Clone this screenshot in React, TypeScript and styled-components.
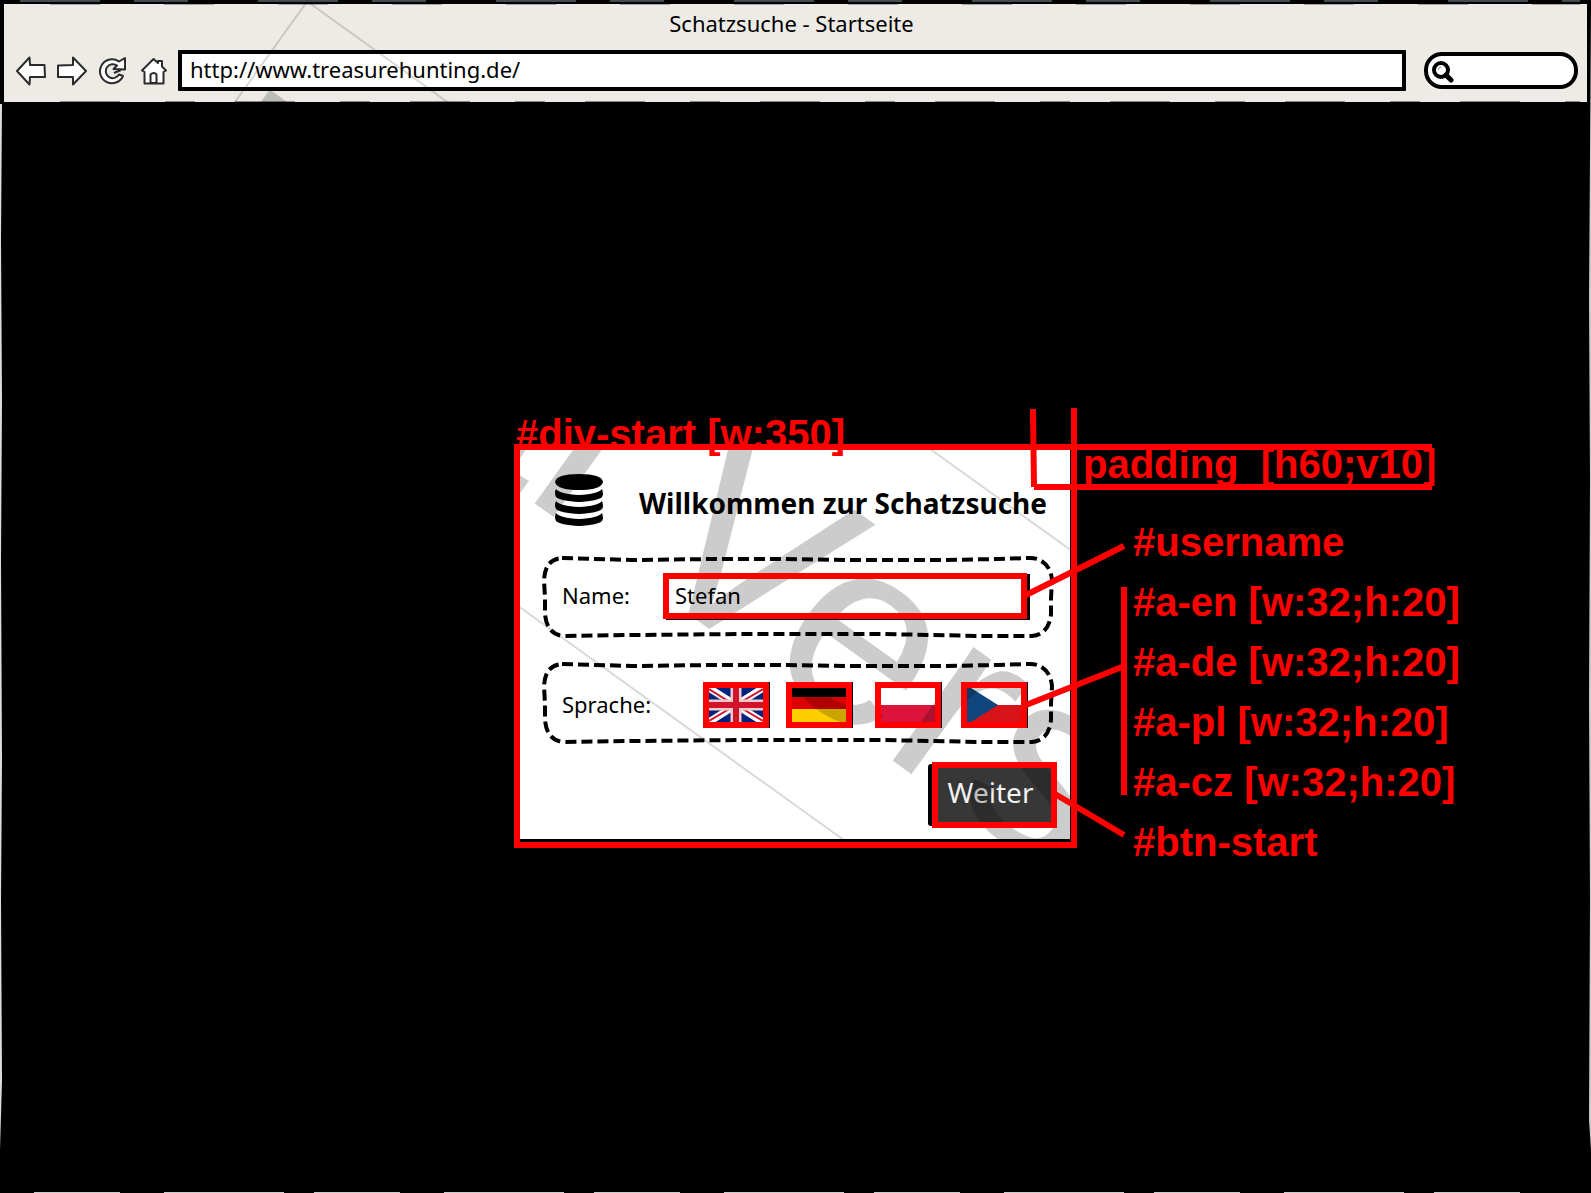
import React from "react";
import styled, { createGlobalStyle } from "styled-components";

const RED = "#ff0000";
const UI_FONT = '"Noto Sans", "Open Sans", sans-serif';
const NOTE_FONT = '"Liberation Sans", Arial, sans-serif';

const GlobalStyle = createGlobalStyle`
  *, *::before, *::after { box-sizing: border-box; }
  body { margin: 0; background: #000; font-family: ${UI_FONT}; }
`;

const Page = styled.div`
  position: relative;
  display: flex;
  flex-direction: column;
  min-height: 100vh;
  overflow: hidden;
  background: #000;
  color: #000;
`;

/* ---------- browser chrome ---------- */

const Chrome = styled.header`
  border: solid #000;
  border-width: 4px 4px 0;
  padding-bottom: 11px;
  background: #eeebe6;
`;

const WindowTitle = styled.h1`
  margin: 0;
  padding: 4px 8px 12px 0;
  font-size: 22px;
  font-weight: 400;
  line-height: 30px;
  text-align: center;
`;

const Toolbar = styled.div`
  display: flex;
  align-items: center;
  gap: 18px;
  padding: 0 9px 0 12px;
`;

const Location = styled.div`
  display: flex;
  flex: 1;
  align-items: center;
  gap: 9px;
`;

const Nav = styled.nav`
  display: flex;
  gap: 11px;
`;

const IconButton = styled.button`
  display: flex;
  padding: 0;
  border: 0;
  background: none;
`;

const UrlInput = styled.input`
  flex: 1;
  min-width: 0;
  height: 41px;
  padding: 0 8px 4px;
  border: 4px solid #000;
  border-radius: 1px;
  background: #fff;
  color: #000;
  font: 22px ${UI_FONT};
`;

const Search = styled.label`
  display: flex;
  align-items: center;
  width: 154px;
  height: 37px;
  padding-left: 4px;
  border: 4px solid #000;
  border-radius: 18px;
  background: #fff;
`;

const SearchInput = styled.input`
  flex: 1;
  min-width: 0;
  border: 0;
  background: none;
  outline: none;
  font: 16px ${UI_FONT};
`;

/* ---------- stage and dialog ---------- */

const Stage = styled.main`
  display: flex;
  flex: 1;
  align-items: center;
  justify-content: center;
  padding-bottom: 3px;
`;

const Marked = styled.div`
  position: relative;
  &::after {
    content: "";
    position: absolute;
    inset: 0;
    z-index: 3;
    border: 6px solid ${RED};
    pointer-events: none;
  }
`;

const DialogFrame = styled(Marked)`
  width: 563px;
  padding: 6px 7px 9px 6px;
  background: #000;
`;

const Dialog = styled.form`
  display: flex;
  flex-direction: column;
  padding: 24px 13px 11px 22px;
  background: #fff;
`;

const DialogHeader = styled.div`
  display: flex;
  align-items: flex-end;
  gap: 36px;
  margin-bottom: 30px;
  padding-left: 13px;
`;

const DialogTitle = styled.h2`
  margin: 0;
  font-size: 28px;
  font-weight: 700;
  line-height: 46px;
  white-space: nowrap;
`;

const Group = styled.div<{ $pad: string }>`
  position: relative;
  display: grid;
  grid-template-columns: 1fr ${(p) => (p.$pad === "field" ? "364px" : "324px")};
  align-items: center;
  min-height: 82px;
  margin: 0 3px ${(p) => (p.$pad === "field" ? "24px" : "18px")} 0;
  padding: ${(p) => (p.$pad === "field" ? "17px 27px 19px 20px" : "20px 27px 16px 20px")};
`;

const Dashes = styled.svg`
  position: absolute;
  inset: 0;
  width: 100%;
  height: 100%;
  pointer-events: none;
`;

const Caption = styled.label`
  padding-bottom: 2px;
  font-size: 22px;
  line-height: 30px;
`;

const FieldBox = styled(Marked)`
  height: 46px;
  box-shadow: 3px 1px 0 #000;
`;

const NameInput = styled.input`
  display: block;
  width: 100%;
  height: 100%;
  padding: 0 12px 2px;
  border: 0;
  background: #fff;
  color: #000;
  font: 22px ${UI_FONT};
`;

const Flags = styled.div`
  display: grid;
  grid-template-columns: 83px 89px 86px 66px;
`;

const FlagLink = styled(Marked).attrs({ as: "a" })<{ href?: string }>`
  display: block;
  width: 66px;
  height: 46px;
  padding: 6px;
  box-shadow: 1px 0 0 #000;
  svg { display: block; }
`;

const NextBox = styled(Marked)`
  align-self: flex-end;
  width: 125px;
  height: 66px;
  border-radius: 5px;
  box-shadow: -6px 0 0 -2px #000;
`;

const NextButton = styled.button`
  width: 100%;
  height: 100%;
  padding: 0 8px 6px 0;
  border: 0;
  background: #373737;
  color: #f2f2f2;
  font: 28px ${UI_FONT};
`;

/* ---------- trial stamp ---------- */

const Stamp = styled.div`
  position: absolute;
  top: 0;
  left: 307px;
  z-index: 2;
  padding: 0 20px 0 14px;
  border: 2px solid rgba(0, 0, 0, 0.15);
  color: rgba(0, 0, 0, 0.2);
  font: 264px/366px ${NOTE_FONT};
  white-space: nowrap;
  transform: rotate(35.7deg);
  transform-origin: 0 0;
  pointer-events: none;
`;

/* ---------- red notes ---------- */

const Leaders = styled.svg`
  position: absolute;
  top: 0;
  left: 0;
  z-index: 3;
  overflow: visible;
  pointer-events: none;
`;

const Note = styled.div<{ $x: number; $y: number }>`
  position: absolute;
  left: ${(p) => p.$x}px;
  top: ${(p) => p.$y}px;
  z-index: 3;
  color: ${RED};
  font: 700 40px/60px ${NOTE_FONT};
  white-space: pre;
`;

/* ---------- rough window edge ---------- */

const Edge = styled.svg`
  position: absolute;
  inset: 0;
  z-index: 1;
  width: 100%;
  height: 100%;
  pointer-events: none;
`;

const WindowEdge = () => (
  <Edge viewBox="0 0 1591 1193" preserveAspectRatio="none" aria-hidden="true">
    <path d="M0 104H2L1 240 2 400 1 560 2 760 1 900 2 1080 0 1150Z" fill="#ddd" />
    <path d="M1591 4L1589 300 1590 480 1589 700 1590 900 1589 1120 1591 1150Z" fill="#ccc" />
    <path d="M34 1192.5H1540" stroke="#ccc" strokeDasharray="86 44 120 30" />
    <path d="M20 1H1580" stroke="#454a4e" strokeWidth="2" strokeDasharray="80 34 54 70" />
    <path d="M50 4.5H1580" stroke="#aaa7a3" strokeDasharray="50 64" />
    <path d="M60 101.5H1580" stroke="#8a8884" strokeDasharray="60 45 30 40" />
  </Edge>
);

const outline = { fill: "#fff", stroke: "#2b2b2b", strokeWidth: 2, strokeLinejoin: "round" as const };

const BackIcon = () => (
  <svg width="30" height="30" viewBox="0 0 30 30"><path {...outline} d="M1 15 13.5 1.5 14 9H28.5L29 21H14L13.5 28.5Z" /></svg>
);
const ForwardIcon = () => (
  <svg width="30" height="30" viewBox="0 0 30 30"><path {...outline} d="M29 15 16 1.5V9L1 9.5V21H16V28.5Z" /></svg>
);
const ReloadIcon = () => (
  <svg width="30" height="30" viewBox="0 0 30 30">
    <path {...outline} d="M21 5.5 27 2 27 13.5 15.5 13 19 9.5A7 7 0 1 0 21 18.5L25 20A12 12 0 1 1 21 5.5Z" />
    <path d="M23 14 16 17" stroke="#2b2b2b" strokeWidth="2" />
  </svg>
);
const HomeIcon = () => (
  <svg width="30" height="30" viewBox="0 0 30 30">
    <path {...outline} d="M3 14.5 14.5 3 19 7V5H23V10.5L27 14.5 24.5 16V27.5H5.5V16Z" />
    <path {...outline} d="M11.5 27V18.5Q15 15.5 17.5 18.5V27Z" />
  </svg>
);
const SearchIcon = () => (
  <svg width="23" height="24" viewBox="0 0 23 24" fill="none" stroke="#000">
    <circle cx="9" cy="11" r="7" strokeWidth="4" />
    <path d="M14 16 19 21" strokeWidth="5" strokeLinecap="round" />
    <path d="M6 11Q6.5 8 9 8" stroke="#888" />
  </svg>
);
const CoinsIcon = () => (
  <svg width="48" height="52" viewBox="0 0 48 52" aria-hidden="true">
    <path d="M0 8Q1 0 24 0T48 8Q46 16 24 16T0 8Z" />
    {[15, 27, 39].map((y) => (
      <path key={y} transform={`translate(0 ${y})`} d="M1 0Q5 5 24 6 43 5 47 0 49 5 47 8 43 12 24 13 5 12 1 8-1 4 1 0Z" />
    ))}
  </svg>
);

const GroupOutline = () => (
  <Dashes viewBox="0 0 512 82" preserveAspectRatio="none" aria-hidden="true">
    <path
      d="M20 2Q55 3 90 4L170 3 240 3 310 4 400 4 455 3 488 2C502 2 509 12 510 24L509 42 509 58C508 70 502 79 490 80L440 80 340 78 200 78 90 79 22 80C9 79 4 70 3 58L3 42 2 24C3 10 8 3 20 2Z"
      fill="none"
      stroke="#000"
      strokeWidth="4"
      strokeDasharray="11 5"
    />
  </Dashes>
);

const UkFlag = () => (
  <svg width="54" height="34" viewBox="0 0 54 34">
    <path d="M0 0H54V34H0Z" fill="#00247d" />
    <path d="M0 0 54 34M54 0 0 34" stroke="#fff" strokeWidth="7" />
    <path d="M0 1 27 18M54 1 27 17M0 33 27 17M54 33 27 17" stroke="#cf142b" strokeWidth="2" />
    <path d="M27 0V34M0 17H54" stroke="#f3c9ce" strokeWidth="11" />
    <path d="M27 0V34M0 17H54" stroke="#cf142b" strokeWidth="6" />
  </svg>
);
const DeFlag = () => (
  <svg width="54" height="34" viewBox="0 0 54 34">
    <path d="M0 0H54V9H0Z" />
    <path d="M0 9H54V21H0Z" fill="#dd0000" />
    <path d="M0 21H54V34H0Z" fill="#ffce00" />
  </svg>
);
const PlFlag = () => (
  <svg width="54" height="34" viewBox="0 0 54 34">
    <path d="M0 0H54V17H0Z" fill="#fff" />
    <path d="M0 17H54V34H0Z" fill="#dc143c" />
  </svg>
);
const CzFlag = () => (
  <svg width="54" height="34" viewBox="0 0 54 34">
    <path d="M0 0H54V17H0Z" fill="#fff" />
    <path d="M0 17H54V34H0Z" fill="#d7141a" />
    <path d="M0 0H4L31 17 4 34H0Z" fill="#11457e" />
  </svg>
);

const NAV = [
  { label: "Zurück", Icon: BackIcon },
  { label: "Vorwärts", Icon: ForwardIcon },
  { label: "Neu laden", Icon: ReloadIcon },
  { label: "Start", Icon: HomeIcon },
];

const LANGUAGES = [
  { id: "a-en", label: "English", Flag: UkFlag },
  { id: "a-de", label: "Deutsch", Flag: DeFlag },
  { id: "a-pl", label: "Polski", Flag: PlFlag },
  { id: "a-cz", label: "Čeština", Flag: CzFlag },
];

const ID_NOTES = [
  "#username",
  "#a-en [w:32;h:20]",
  "#a-de [w:32;h:20]",
  "#a-pl [w:32;h:20]",
  "#a-cz [w:32;h:20]",
  "#btn-start",
];

export default function App() {
  return (
    <Page>
      <GlobalStyle />
      <Chrome>
        <WindowTitle>Schatzsuche - Startseite</WindowTitle>
        <Toolbar>
          <Location>
            <Nav>
              {NAV.map(({ label, Icon }) => (
                <IconButton key={label} type="button" aria-label={label}>
                  <Icon />
                </IconButton>
              ))}
            </Nav>
            <UrlInput aria-label="Adresse" defaultValue="http://www.treasurehunting.de/" />
          </Location>
          <Search>
            <SearchIcon />
            <SearchInput type="text" aria-label="Suche" />
          </Search>
        </Toolbar>
      </Chrome>

      <Stage>
        <DialogFrame id="div-start">
          <Dialog onSubmit={(e) => e.preventDefault()}>
            <DialogHeader>
              <CoinsIcon />
              <DialogTitle>Willkommen zur Schatzsuche</DialogTitle>
            </DialogHeader>
            <Group $pad="field">
              <GroupOutline />
              <Caption htmlFor="username">Name:</Caption>
              <FieldBox>
                <NameInput id="username" defaultValue="Stefan" />
              </FieldBox>
            </Group>
            <Group $pad="flags">
              <GroupOutline />
              <Caption as="span">Sprache:</Caption>
              <Flags>
                {LANGUAGES.map(({ id, label, Flag }) => (
                  <FlagLink key={id} id={id} href={`#${id}`} aria-label={label}>
                    <Flag />
                  </FlagLink>
                ))}
              </Flags>
            </Group>
            <NextBox>
              <NextButton id="btn-start" type="submit">Weiter</NextButton>
            </NextBox>
          </Dialog>

          <Leaders width="563" height="404" fill="none" stroke={RED} strokeWidth="6" aria-hidden="true">
            <path d="M519-35 520 43M560-36V3M560 3H918M520 43H918" />
            <path d="M512 151 610 102M512 261 608 223M610 143V351M541 350 610 391" />
          </Leaders>
          <Note $x={2} $y={-40}>#div-start [w:350]</Note>
          <Note $x={569} $y={-10}>{"padding  [h60;v10]"}</Note>
          <Note $x={619} $y={68}>
            {ID_NOTES.map((note) => (
              <div key={note}>{note}</div>
            ))}
          </Note>
        </DialogFrame>
      </Stage>

      <Stamp aria-hidden="true">Trial Version</Stamp>
      <WindowEdge />
    </Page>
  );
}
